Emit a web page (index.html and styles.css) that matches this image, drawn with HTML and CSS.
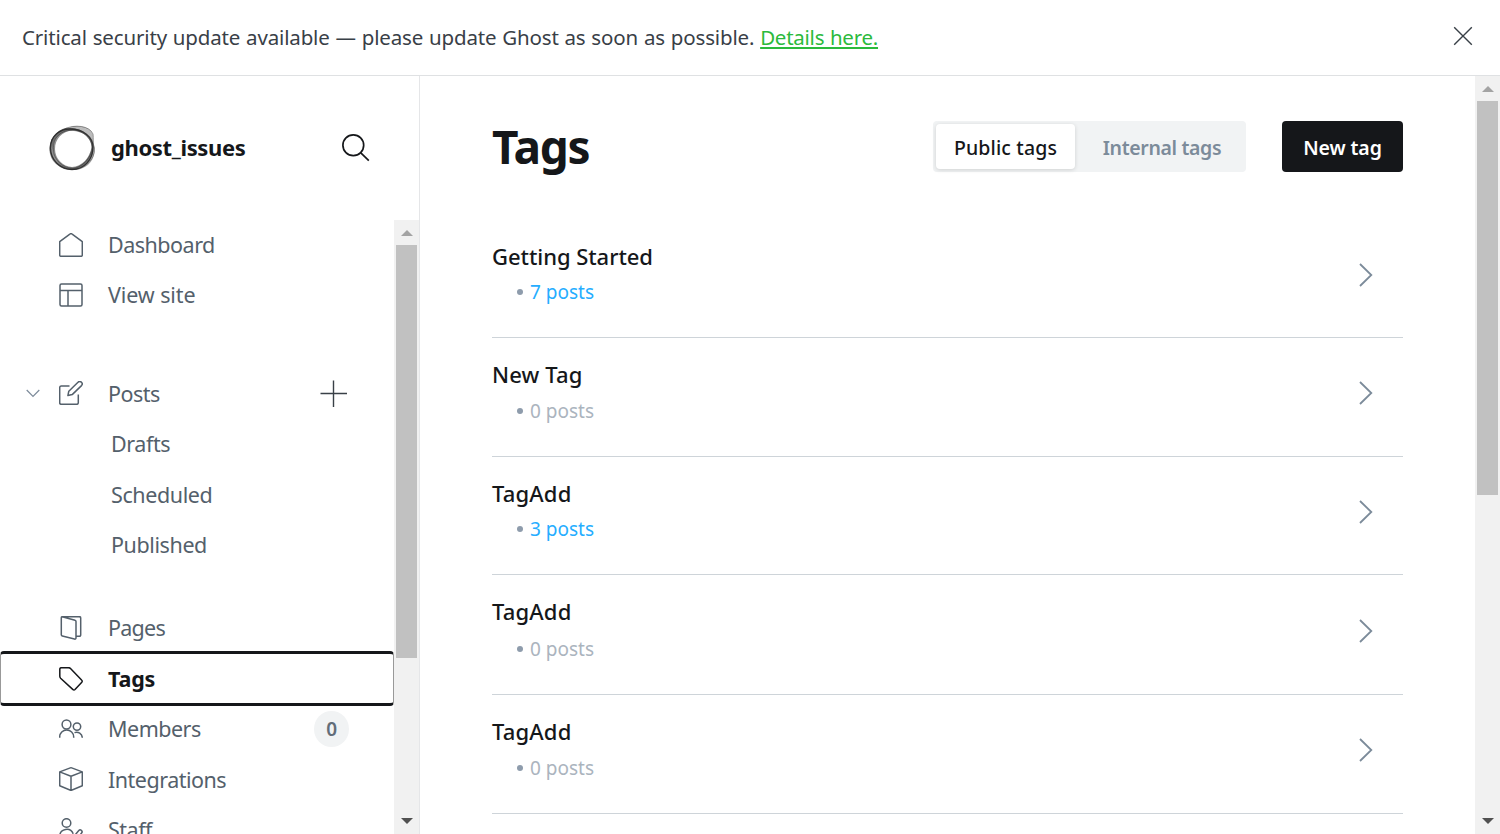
FILE: index.html
```
<!DOCTYPE html>
<html lang="en">
<head>
<meta charset="utf-8">
<title>Tags - ghost_issues</title>
<link rel="stylesheet" href="styles.css">
</head>
<body>
<div class="app">
  <header class="alert">
    <p class="alert-text">Critical security update available — please update Ghost as soon as possible. <a class="alert-link" href="#">Details here.</a></p>
    <button class="alert-close" aria-label="Close"><svg width="20" height="20" viewBox="0 0 20 20"><path d="M1.2 1.2l17.6 17.6M18.8 1.2L1.2 18.8"/></svg></button>
  </header>
  <div class="body">
    <aside class="sidebar">
      <div class="brand">
        <svg class="logo" width="46" height="46" viewBox="0 0 46 46">
          <path class="shade-a" fill-rule="evenodd" d="M.5 23C1 11 10 3 21 3C34 3 44 12 44.500 22C45 35 35 44.500 22 45C10 44 0 36 .5 23ZM6 24C6 34 14 41.500 23 42C33 41.500 41 33 42.500 22C42 12 33 5.500 24 5.500C13 6 6 14 6 24Z"/>
          <path class="shade-b" fill-rule="evenodd" d="M2 15C6 7 14 2.500 20 2.500C29 -1 42 2 44 10C43.500 15 46 20 45.500 28C44 38 36 44 27 45C13 45 3 36 2 15ZM3.500 25C5 36 14 43 24 43C32 41 38 36 40.500 29C43.500 24 43.500 18 40 13C34 7 27 6 19 5.500C9 8 3.500 15 3.500 25Z"/>
          <path class="ring" d="M1.500 23C1.500 10 12 4 21 4C34 4 44 12 44 22C44 35 35 44.500 23 44.500C11 44.500 1.500 35 1.500 23Z"/>
          <path class="ring thin" d="M14 4.500C26 -1.500 41 1 44 9C45 14 43 17 45.500 23C46 34 37 44 25 44.500C13 45 3 36 1 25C.5 15 7 7 14 4.500Z"/>
          <path class="ring thin" d="M7 13C13 5 23 4 29 6C37 8.500 43 15 43.500 23C42.500 31 36 40 27 43C17 44.500 8 38 5 29C4 23 4 18 7 13Z"/>
        </svg>
        <span class="brand-name">ghost_issues</span>
        <svg class="search" width="28" height="28" viewBox="0 0 28 28"><circle cx="11.300" cy="11.300" r="10.400"/><path d="M18.800 18.800l8 7.800"/></svg>
      </div>
      <div class="nav-wrap">
        <nav class="nav">
          <ul class="group">
            <li class="item"><svg class="ico" viewBox="0 0 24 24"><path d="M.7 8.700L11.200.900a1.300 1.300 0 0 1 1.600 0L23.300 8.700v13.300a1.300 1.300 0 0 1-1.300 1.300H2A1.300 1.300 0 0 1 .7 22z"/></svg><span class="label">Dashboard</span></li>
            <li class="item view"><svg class="ico" viewBox="0 0 24 24"><rect x="1" y="1" width="22" height="22" rx="1.500"/><path d="M1 7.500h22M9 7.500V23"/></svg><span class="label">View site</span></li>
          </ul>
          <ul class="group posts">
            <li class="item"><svg class="chev" width="14" height="9" viewBox="0 0 14 9"><path d="M.7 1l6.300 6.500L13.300 1"/></svg><svg class="ico" viewBox="0 0 24 24"><path d="M10.500 5H2.200A1.500 1.500 0 0 0 .7 6.500v15.300a1.500 1.500 0 0 0 1.500 1.500h15.600a1.500 1.500 0 0 0 1.500-1.500V13.500M13.200 13.600l-4.300 1 .9-4.400L19 1.300a2.350 2.350 0 0 1 3.500 3.300z"/></svg><span>Posts</span><svg class="plus" width="28" height="28" viewBox="0 0 28 28"><path d="M.5 13.500h26.500M13.500.500V27"/></svg></li>
            <li class="item sub"><span class="label">Drafts</span></li>
            <li class="item sub">Scheduled</li>
            <li class="item sub"><span class="label">Published</span></li>
          </ul>
          <ul class="group">
            <li class="item tight"><svg class="ico" viewBox="0 0 24 24"><path d="M3.500.700h17a1.200 1.200 0 0 1 1.200 1.200v17.200a1.200 1.200 0 0 1-1.200 1.200H17M3.200.700L16 4.300a1.300 1.300 0 0 1 1 1.300v16.300a1.200 1.200 0 0 1-1.500 1.200L3.300 20a1.300 1.300 0 0 1-1-1.300V1.700a1 1 0 0 1 .9-1z"/></svg><span class="label">Pages</span></li>
            <li class="item active"><svg class="ico" viewBox="0 0 24 24"><path d="M.8 2.200A1.500 1.500 0 0 1 2.300.700h7.200a2.800 2.800 0 0 1 2 .800L22.800 13.200a1.400 1.400 0 0 1 0 2L16 22.600a1.400 1.400 0 0 1-2 0L1.600 11.200A2.800 2.800 0 0 1 .8 9.200z"/></svg><span>Tags</span></li>
            <li class="item"><svg class="ico" viewBox="0 0 24 24"><circle cx="7.500" cy="7.500" r="4.400"/><path d="M.7 20.700v-.7a7 7 0 0 1 14 0v.7"/><circle cx="18" cy="9.600" r="3.700"/><path d="M15.500 15.600a5.700 5.700 0 0 1 7.800 5.100"/></svg><span>Members</span><span class="badge">0</span></li>
            <li class="item"><svg class="ico" viewBox="0 0 24 24"><path d="M11.300.900a2 2 0 0 1 1.400 0L23.300 4.900v13.800L12 23.500.700 18.700V4.900zM.7 4.900L12 9.300l11.300-4.400M12 9.300v14"/></svg><span>Integrations</span></li>
            <li class="item"><svg class="ico" viewBox="0 0 24 24"><circle cx="7.500" cy="5" r="4.300"/><path d="M.7 18a7 7 0 0 1 13.500-2.200M15.500 17.700l4.300-5.200a1.900 1.900 0 0 1 3 2.300l-5 6-3 1z"/></svg><span>Staff</span></li>
          </ul>
        </nav>
        <div class="scrollbar side-bar"><i class="up"></i><i class="thumb"></i><i class="down"></i></div>
      </div>
    </aside>
    <main class="main">
      <div class="content">
        <div class="top">
          <h1 class="title">Tags</h1>
          <div class="toggle"><span class="seg on">Public tags</span><span class="seg internal">Internal tags</span></div>
          <button class="new-tag">New tag</button>
        </div>
        <ul class="list">
          <li class="row"><div><h3 class="name start">Getting Started</h3><p class="meta"><b class="dot"></b><a class="count">7 posts</a></p></div><svg class="arrow" width="14" height="24" viewBox="0 0 14 24"><path d="M1 1l11.300 11L1 23"/></svg></li>
          <li class="row"><div><h3 class="name">New Tag</h3><p class="meta low"><b class="dot"></b><span class="count none">0 posts</span></p></div><svg class="arrow" width="14" height="24" viewBox="0 0 14 24"><path d="M1 1l11.300 11L1 23"/></svg></li>
          <li class="row"><div><h3 class="name">TagAdd</h3><p class="meta"><b class="dot"></b><a class="count">3 posts</a></p></div><svg class="arrow" width="14" height="24" viewBox="0 0 14 24"><path d="M1 1l11.300 11L1 23"/></svg></li>
          <li class="row taller"><div><h3 class="name">TagAdd</h3><p class="meta lower"><b class="dot"></b><span class="count none">0 posts</span></p></div><svg class="arrow" width="14" height="24" viewBox="0 0 14 24"><path d="M1 1l11.300 11L1 23"/></svg></li>
          <li class="row"><div><h3 class="name">TagAdd</h3><p class="meta low"><b class="dot"></b><span class="count none">0 posts</span></p></div><svg class="arrow" width="14" height="24" viewBox="0 0 14 24"><path d="M1 1l11.300 11L1 23"/></svg></li>
        </ul>
      </div>
      <div class="scrollbar main-bar"><i class="up"></i><i class="thumb"></i><i class="down"></i></div>
    </main>
  </div>
</div>
</body>
</html>
```
FILE: styles.css
```
* { box-sizing: border-box; margin: 0; padding: 0; }
body { font-family: "Noto Sans", "Segoe UI", sans-serif; color: #15171a; background: #fff; overflow: hidden; }
ul { list-style: none; }
button { border: 0; background: none; font: inherit; }
svg { display: block; flex: none; fill: none; stroke: currentColor; }
.app { height: 834px; display: flex; flex-direction: column; }

.alert { height: 76px; flex: none; display: flex; align-items: center; justify-content: space-between; padding: 0 27px 2px 22px; border-bottom: 1px solid #dfe1e3; color: #394047; }
.alert-text { font-size: 20.500px; line-height: 30px; letter-spacing: -.15px; word-spacing: .65px; white-space: nowrap; }
.alert-link { color: #2bba3c; letter-spacing: -.25px; text-decoration-thickness: 2px; text-underline-offset: 2px; }
.alert-close { color: #394047; padding-bottom: 2px; }
.alert-close svg { stroke-width: 1.4; }

.body { flex: 1; min-height: 0; display: flex; }
.sidebar { width: 420px; flex: none; border-right: 1px solid #e5e6e8; display: flex; flex-direction: column; }
.brand { height: 144px; flex: none; display: flex; align-items: center; padding: 0 49px; }
.logo { stroke: none; }
.shade-a { fill: #222; fill-opacity: .5; }
.shade-b { fill: #222; fill-opacity: .3; }
.ring { stroke: #222; stroke-width: 1.3; stroke-opacity: .8; }
.thin { stroke-width: .8; stroke-opacity: .55; }
.brand-name { margin-left: 16px; padding-bottom: 2px; font-size: 22px; font-weight: 700; letter-spacing: -.36px; }
.search { margin-left: auto; stroke-width: 1.7; }

.nav-wrap { flex: 1; min-height: 0; display: flex; }
.nav { flex: 1; min-width: 0; overflow: hidden; }
.item { height: 50.4px; display: flex; align-items: center; padding: 0 45px 0 59px; position: relative; font-size: 21.500px; letter-spacing: -.5px; color: #54606b; }
.label { padding-bottom: 2px; }
.view { letter-spacing: -.1px; }
.view .ico { margin-bottom: 2px; }
.tight { letter-spacing: -.75px; }
.ico { width: 24px; height: 24px; margin-right: 25px; stroke-width: 1.5; stroke-linejoin: round; }
.posts { margin: 48px 0 32.600px; }
.posts .ico, .chev { margin-bottom: 2px; }
.sub { padding-left: 111px; letter-spacing: -.4px; }
.chev { position: absolute; left: 25.500px; top: 20px; color: #7c8b9a; stroke-width: 1.2; }
.plus { margin-left: auto; color: #394047; stroke-width: 1.4; margin-right: 1px; }
.active { color: #15171a; font-weight: 700; letter-spacing: -.2px; }
.active::after { content: ""; position: absolute; inset: -2.500px 0 -2.500px; border: solid #15171a; border-width: 3px 1px; border-left-color: #999; border-right-color: #999; border-radius: 4px; }
.badge { margin-left: auto; width: 35px; height: 36px; border-radius: 50%; background: #f1f3f4; color: #626d79; font-size: 19px; font-weight: 600; display: flex; align-items: center; justify-content: center; }

.scrollbar { width: 25px; flex: none; background: #f1f1f1; display: flex; flex-direction: column; align-items: center; padding-bottom: 10px; }
.up { margin: 10px 0 9px; border: solid transparent; border-width: 0 5.500px 6px; border-bottom-color: #a3a3a3; }
.thumb { width: 21px; background: #c1c1c1; }
.side-bar .thumb { height: 413px; }
.main-bar .thumb { height: 394px; }
.down { margin-top: auto; border: solid transparent; border-width: 6px 5.500px 0; border-top-color: #505050; }
.up, .down { border-left-width: 6px; border-right-width: 6px; }

.main { flex: 1; min-width: 0; display: flex; }
.content { flex: 1; padding: 45px 72px 0; overflow: hidden; }
.top { height: 51px; display: flex; align-items: center; margin-bottom: 47px; }
.title { flex: 1; font-size: 46px; line-height: 51px; font-weight: 700; letter-spacing: -1.300px; }
.toggle { display: flex; width: 313px; height: 51px; padding: 3px; background: #f1f3f4; border-radius: 4px; }
.seg { flex: 1; display: flex; align-items: center; justify-content: center; padding-top: 2px; font-size: 19.500px; font-weight: 600; letter-spacing: -.35px; color: #7c8b9a; }
.internal { padding-left: 6px; }
.on { flex: none; width: 139px; height: 45px; background: #fff; border-radius: 4px; color: #15171a; font-weight: 500; letter-spacing: .15px; box-shadow: 0 1px 4px rgba(0,0,0,.14); }
.new-tag { width: 121px; height: 51px; margin-left: 36px; padding-top: 2px; border-radius: 4px; background: #15171a; color: #fff; font-size: 19.500px; font-weight: 600; letter-spacing: -.1px; }
.row { height: 119px; padding: 22px 30px 0 0; display: flex; justify-content: space-between; border-bottom: 1px solid #ced4d9; }
.row:first-child { padding-top: 23px; }
.row:nth-child(3) { height: 118px; }
.row.taller { height: 120px; }
.name { font-size: 22px; line-height: 28px; font-weight: 500; letter-spacing: .15px; }
.start { letter-spacing: -.05px; }
.meta { display: flex; align-items: center; padding-left: 25px; margin-top: 8px; font-size: 19px; line-height: 28px; }
.low { margin-top: 9px; }
.lower { margin-top: 10px; }
.dot { width: 6px; height: 6px; border-radius: 50%; background: #8e9cac; margin-right: 7px; }
.low .dot, .lower .dot { margin-bottom: 1px; }
.count { color: #26adff; }
.none { color: #abb4be; }
.arrow { margin-top: 21px; color: #7c8b9a; stroke-width: 1.800; }
.taller .arrow { margin-top: 22px; }
```
